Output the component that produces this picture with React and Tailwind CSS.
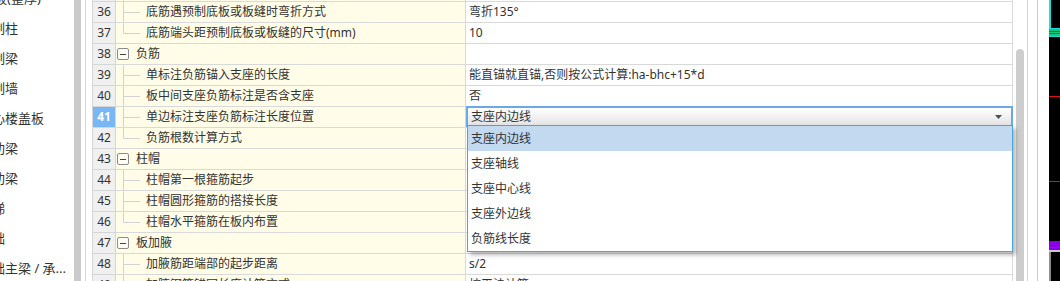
import React from "react";

const rows = [
  { n: 35, t: "c", name: "底筋锚入支座的长度", val: "", last: false },
  { n: 36, t: "c", name: "底筋遇预制底板或板缝时弯折方式", val: "弯折135°", last: false },
  { n: 37, t: "c", name: "底筋端头距预制底板或板缝的尺寸(mm)", val: "10", last: true },
  { n: 38, t: "g", name: "负筋", val: "" },
  { n: 39, t: "c", name: "单标注负筋锚入支座的长度", val: "能直锚就直锚,否则按公式计算:ha-bhc+15*d", last: false },
  { n: 40, t: "c", name: "板中间支座负筋标注是否含支座", val: "否", last: false },
  { n: 41, t: "c", name: "单边标注支座负筋标注长度位置", val: "支座内边线", last: false },
  { n: 42, t: "c", name: "负筋根数计算方式", val: "", last: true },
  { n: 43, t: "g", name: "柱帽", val: "" },
  { n: 44, t: "c", name: "柱帽第一根箍筋起步", val: "", last: false },
  { n: 45, t: "c", name: "柱帽圆形箍筋的搭接长度", val: "", last: false },
  { n: 46, t: "c", name: "柱帽水平箍筋在板内布置", val: "", last: true },
  { n: 47, t: "g", name: "板加腋", val: "" },
  { n: 48, t: "c", name: "加腋筋距端部的起步距离", val: "s/2", last: false },
  { n: 49, t: "c", name: "加腋钢筋锚固长度计算方式", val: "按平法计算", last: false },
];

const options = ["支座内边线", "支座轴线", "支座中心线", "支座外边线", "负筋线长度"];

const leftItems = [
  { text: "叠合板(整厚)", cls: "ml-[-32px]" },
  { text: "预制柱", cls: "ml-[-21px]" },
  { text: "预制梁", cls: "ml-[-21px]" },
  { text: "预制墙", cls: "ml-[-21px]" },
  { text: "空心楼盖板", cls: "ml-[-21px]" },
  { text: "主肋梁", cls: "ml-[-21px]" },
  { text: "次肋梁", cls: "ml-[-21px]" },
  { text: "楼梯", cls: "ml-[-21px]" },
  { text: "基础", cls: "ml-[-21px]" },
  { text: "基础主梁 / 承...", cls: "ml-[-21px]" },
];

function Connector({ last }) {
  return (
    <svg width="24" height="20" className="shrink-0">
      <line x1="7.5" y1="0" x2="7.5" y2={last ? 10.5 : 20} stroke="#d2d2d2" strokeWidth="1" />
      <line x1="7.5" y1="10.5" x2="24" y2="10.5" stroke="#d2d2d2" strokeWidth="1" />
    </svg>
  );
}

function Row({ r }) {
  const sel = r.n === 41;
  return (
    <div className="relative flex h-[21px] shrink-0">
      <div
        className={
          sel
            ? "flex w-[24px] items-center justify-center border-x border-t border-[#d6d6d6] bg-[#79b6f5] font-bold leading-[20px] text-white"
            : "flex w-[24px] items-center justify-center border-x border-t border-[#d6d6d6] bg-[#f0f0f0] leading-[20px] text-[#333]"
        }
      >
        {r.n}
      </div>
      <div className="flex w-[350px] items-center overflow-hidden whitespace-nowrap border-r border-t border-[#d9d9d9] bg-[#fffde8] leading-[20px]">
        {r.t === "g" ? (
          <>
            <div className="ml-[1px] flex h-[12px] w-[12px] shrink-0 items-center justify-center rounded-[2px] border border-[#8c8c8c] bg-[#fffef5]">
              <div className="h-[1px] w-[6px] bg-[#444]" />
            </div>
            <span className="ml-[7px]">{r.name}</span>
          </>
        ) : (
          <>
            <Connector last={r.last} />
            <span className="ml-[6px]">{r.name}</span>
          </>
        )}
      </div>
      {sel ? (
        <div className="flex h-[21px] w-[547px] items-center justify-between border-2 border-[#6ba8e5] bg-linear-to-b from-white to-[#e4e4e4] pl-[3px] pr-[9px] leading-[17px]">
          <span>支座内边线</span>
          <svg width="7" height="4" viewBox="0 0 7 4">
            <path d="M0 0H7L3.5 4Z" fill="#4b5060" />
          </svg>
        </div>
      ) : (
        <div className="w-[547px] overflow-hidden whitespace-nowrap border-r border-t border-[#d9d9d9] bg-white pl-[3px] leading-[20px]">
          {r.val}
        </div>
      )}
      {sel && (
        <div className="absolute left-[375px] top-[19px] z-10 w-[546px] border border-[#49a5d7] bg-white shadow-[3px_3px_4px_rgba(0,0,0,0.28)]">
          {options.map((o, i) => (
            <div
              key={o}
              className={i === 0 ? "h-[25px] bg-[#c3d9ef] pl-[3px] leading-[25px]" : "h-[25px] pl-[3px] leading-[25px]"}
            >
              {o}
            </div>
          ))}
        </div>
      )}
    </div>
  );
}

export default function App() {
  return (
    <div className="flex h-[281px] w-[1060px] overflow-hidden bg-white font-['Noto_Sans','Noto_Sans_CJK_SC',sans-serif] text-[12px] text-[#333]">
      {/* left tree panel */}
      <div className="flex w-[74px] shrink-0 flex-col overflow-hidden bg-white text-[13px] text-[#333]">
        <div className="mt-[-17px] flex flex-col">
          {leftItems.map((it) => (
            <div key={it.text} className={"h-[30px] shrink-0 whitespace-nowrap leading-[30px] " + it.cls}>
              {it.text}
            </div>
          ))}
        </div>
      </div>
      <div className="w-[7px] shrink-0 bg-[#cbcbcb]" />
      <div className="w-[4px] shrink-0 bg-white" />
      <div className="w-[1px] shrink-0 bg-[#d6d6d6]" />
      <div className="w-[6px] shrink-0 bg-white" />

      {/* property grid */}
      <div className="flex w-[921px] shrink-0 flex-col">
        <div className="mt-[-20px] flex flex-col">
          {rows.map((r) => (
            <Row key={r.n} r={r} />
          ))}
        </div>
      </div>

      {/* vertical scrollbar */}
      <div className="flex w-[14px] shrink-0 flex-col bg-white pl-[3px]">
        <div className="mt-[49px] h-[260px] w-[8px] rounded-t-[4px] bg-[#cdcdcd]" />
      </div>
      <div className="w-[1px] shrink-0 bg-[#d4d4d4]" />
      <div className="w-[9px] shrink-0 bg-white" />
      <div className="w-[1px] shrink-0 bg-[#cbcbcb]" />
      <div className="w-[11px] shrink-0 bg-white" />

      {/* drawing canvas edge */}
      <div className="flex w-[11px] shrink-0 flex-col bg-black">
        <div className="h-[29px] border-l-2 border-[#19e0e0] bg-black" />
        <div className="h-[1px] bg-[#19e0e0]" />
        <div className="h-[2px] bg-[#18c878]" />
        <div className="h-[1px] bg-[#ee1c1c]" />
        <div className="h-[1px] bg-[#18c878]" />
        <div className="h-[1px] bg-[#ee1c1c]" />
        <div className="h-[2px] bg-[#18c878]" />
        <div className="h-[1px] bg-[#19e0e0]" />
        <div className="h-[61px] bg-black" />
        <div className="h-[1px] bg-[#e01010]" />
        <div className="h-[87px] bg-black" />
        <div className="h-[1px] bg-[#e01010]" />
        <div className="h-[60px] bg-black" />
        <div className="h-[1px] bg-[#e01010]" />
        <div className="h-[1px] bg-black" />
        <div className="h-[6px] bg-[#8a00e6]" />
        <div className="h-[1px] bg-[#e01010]" />
        <div className="h-[2px] bg-[#8a00e6]" />
        <div className="h-[2px] bg-[#c8c8c8]" />
        <div className="h-[30px] border-l-2 border-[#8c8c8c] bg-black" />
      </div>
    </div>
  );
}
